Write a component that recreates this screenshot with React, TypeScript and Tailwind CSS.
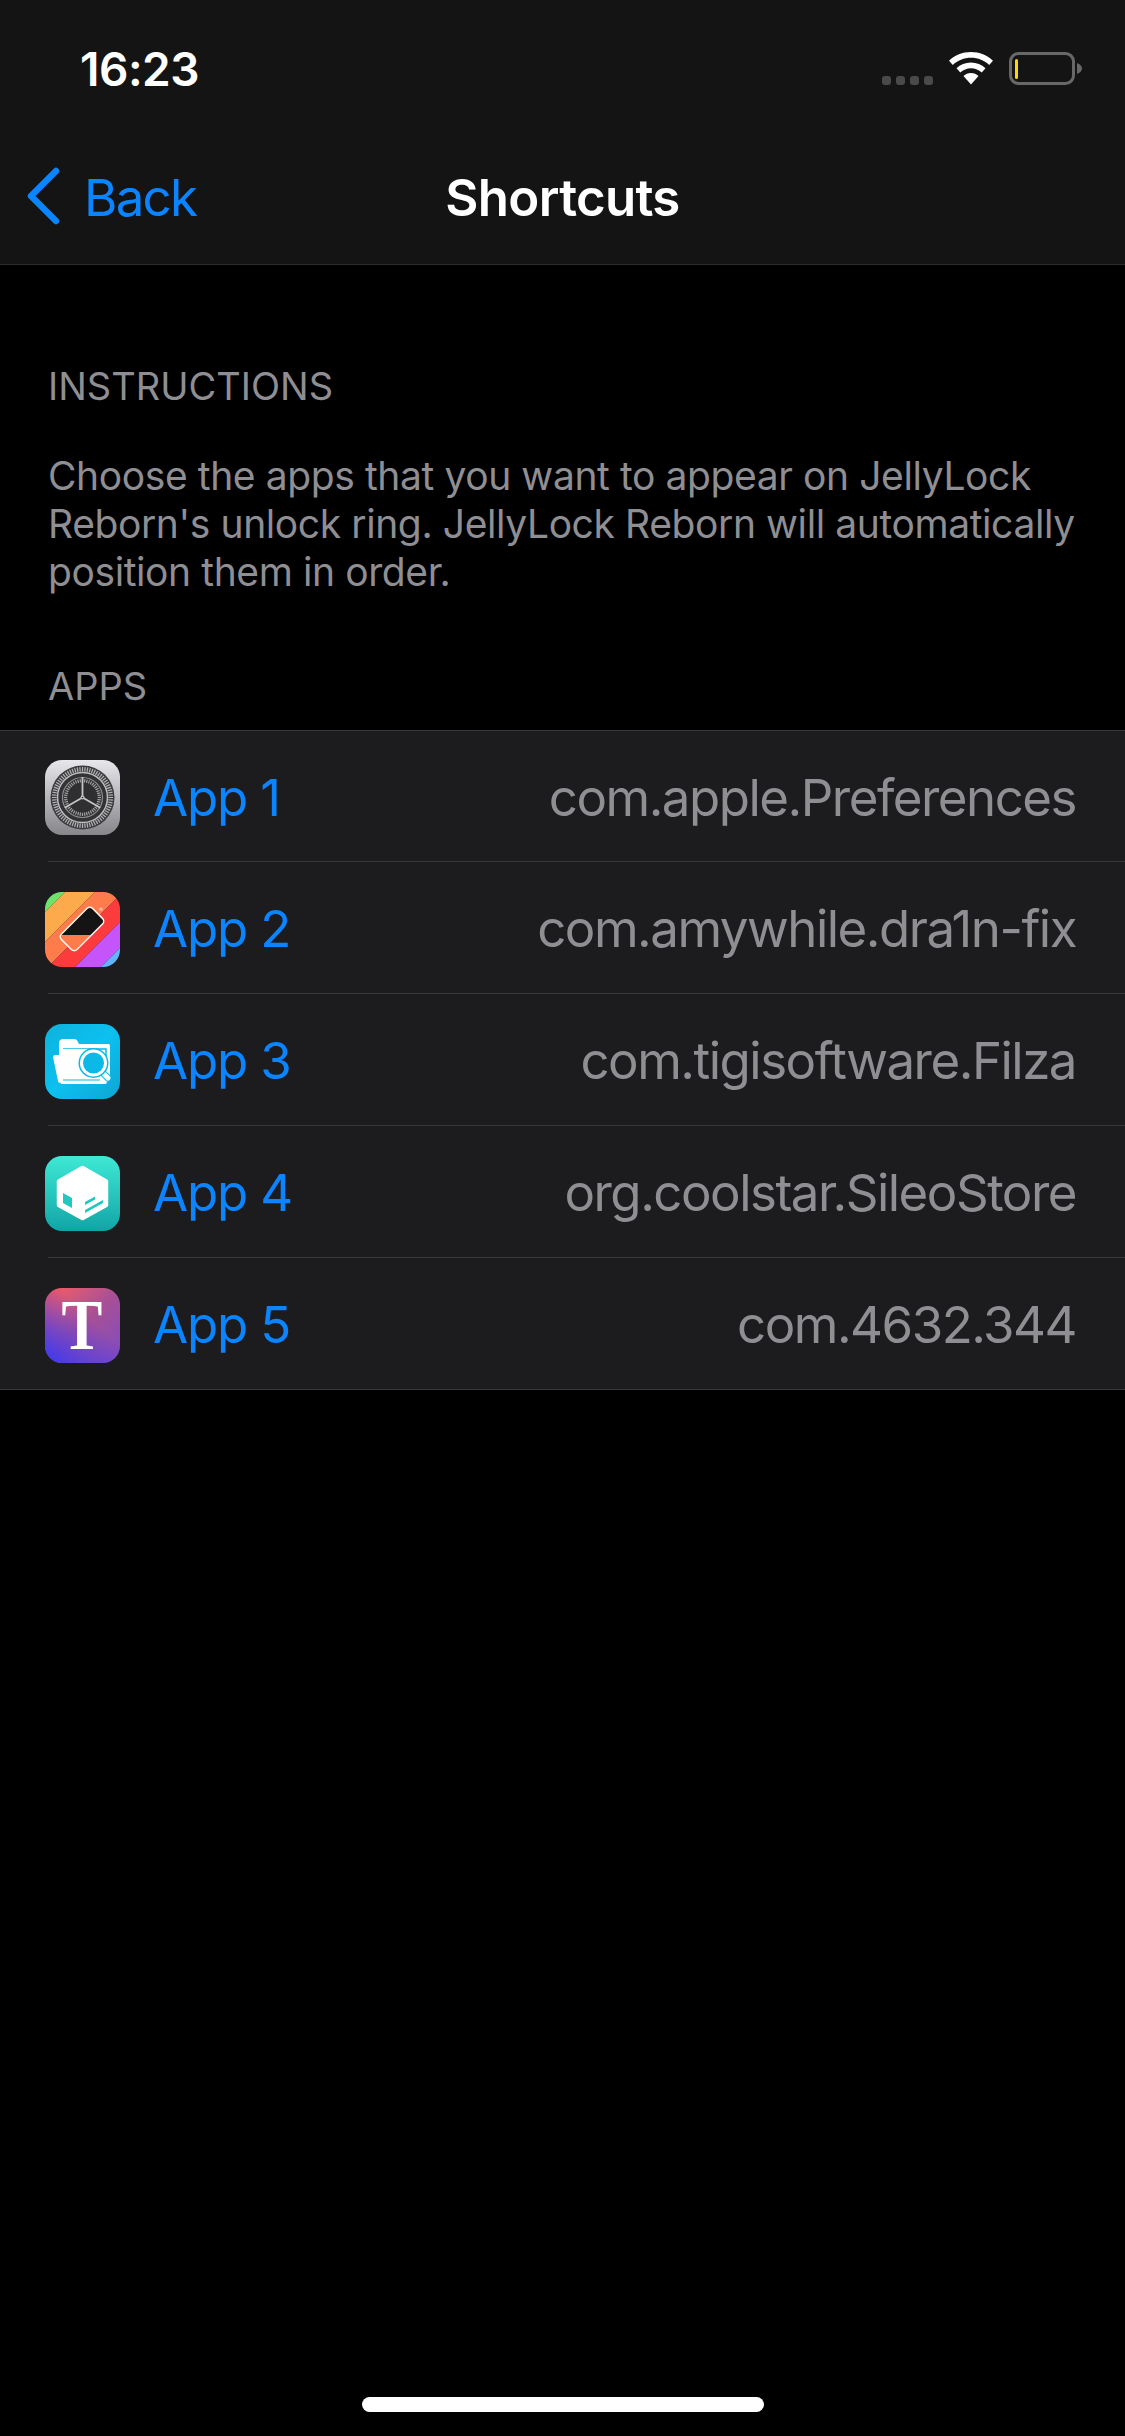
import { Fragment } from "react";

const sans = "font-['Inter','Liberation_Sans',sans-serif]";

function SignalDots() {
  return (
    <svg width="65" height="9" viewBox="0 0 65 9">
      {[0, 14, 28, 42].map((x) => (
        <rect key={x} x={x} width="9" height="9" rx="3" fill="#4a4a4a" />
      ))}
    </svg>
  );
}

function Wifi() {
  return (
    <svg width="46" height="33" viewBox="0 0 46 33">
      <path d="M23 0C14.500 0 6.700 3.300 1 8.700L4.800 13C9.500 8.500 16 5.800 23 5.800S36.500 8.500 41.200 13L45 8.700C39.300 3.300 31.500 0 23 0Z" fill="#fff" />
      <path d="M23 10.500C17.400 10.500 12.300 12.700 8.500 16.300L12.300 20.600C15.100 18 18.900 16.300 23 16.300S30.900 18 33.700 20.600L37.500 16.300C33.700 12.700 28.600 10.500 23 10.500Z" fill="#fff" />
      <path d="M23 21C20.100 21 17.500 22.100 15.500 24L23 32.500L30.500 24C28.500 22.100 25.900 21 23 21Z" fill="#fff" />
    </svg>
  );
}

function Battery() {
  return (
    <svg width="73" height="33" viewBox="0 0 73 33">
      <rect x="1.500" y="1.500" width="63" height="30" rx="8" fill="none" stroke="#686868" strokeWidth="3" />
      <rect x="6" y="7" width="3" height="20" rx="1.500" fill="#ffd60a" />
      <path d="M68 11C71 12 73 14 73 16.500S71 21 68 22Z" fill="#686868" />
    </svg>
  );
}

function SettingsIcon() {
  const outer = Array.from({ length: 72 }, (_, i) => i * 5);
  const inner = Array.from({ length: 48 }, (_, i) => i * 7.5);
  return (
    <div className="h-[75px] w-[75px] shrink-0 overflow-hidden rounded-[17px] bg-gradient-to-b from-[#e8e8ec] to-[#87878b]">
      <svg width="75" height="75" viewBox="0 0 75 75">
        <circle cx="37.500" cy="37.500" r="32" fill="#3c3c3e" />
        {outer.map((a) => (
          <line key={a} x1="37.500" y1="7" x2="37.500" y2="11.500" stroke="#b4b4b8" strokeWidth="1.200" transform={`rotate(${a} 37.500 37.500)`} />
        ))}
        <circle cx="37.500" cy="37.500" r="25" fill="#333335" stroke="#bdbdc0" strokeWidth="1.500" />
        <circle cx="37.500" cy="37.500" r="20" fill="none" stroke="#8e8e92" strokeWidth="1.200" />
        {inner.map((a) => (
          <line key={a} x1="37.500" y1="19" x2="37.500" y2="22.500" stroke="#a5a5a9" strokeWidth="1.100" transform={`rotate(${a} 37.500 37.500)`} />
        ))}
        <circle cx="37.500" cy="37.500" r="15" fill="#2f2f31" />
        {[0, 120, 240].map((a) => (
          <line key={a} x1="37.500" y1="37.500" x2="37.500" y2="17" stroke="#c4c4c8" strokeWidth="1.800" transform={`rotate(${a} 37.500 37.500)`} />
        ))}
        <circle cx="37.500" cy="37.500" r="2" fill="#c4c4c8" />
        <circle cx="37.500" cy="37.500" r="0.800" fill="#2f2f31" />
      </svg>
    </div>
  );
}

function band(a: number, b: number) {
  return `${a},0 ${b},0 0,${b} 0,${a}`;
}

function Dra1nIcon() {
  const stripes: [number, number, string][] = [
    [0, 20, "#6ee36c"],
    [20, 50, "#fdaa4c"],
    [50, 78, "#fe7b4c"],
    [78, 105, "#fb3b3c"],
    [105, 131, "#c555fb"],
    [131, 150, "#63b4ff"],
  ];
  return (
    <div className="h-[75px] w-[75px] shrink-0 overflow-hidden rounded-[17px]">
      <svg width="75" height="75" viewBox="0 0 75 75">
        {stripes.map(([a, b, c]) => (
          <polygon key={c} points={band(a, b)} fill={c} />
        ))}
        <defs>
          <clipPath id="cell">
            <rect x="-22" y="-11" width="44" height="22" rx="4" transform="translate(37 37) rotate(-45)" />
          </clipPath>
        </defs>
        <rect x="-22" y="-11" width="44" height="22" rx="4" transform="translate(37 37) rotate(-45)" fill="#141414" />
        <g clipPath="url(#cell)">
          <rect x="0" y="43" width="75" height="32" fill="#fe7b4c" />
          <polygon points="26,75 75,26 75,43 40,75" fill="#fb3b3c" />
        </g>
        <rect x="-22" y="-11" width="44" height="22" rx="4" transform="translate(37 37) rotate(-45)" fill="none" stroke="#fff3ea" strokeWidth="1.500" />
        <circle cx="56" cy="17" r="1.800" fill="#ffb3a8" />
      </svg>
    </div>
  );
}

function FilzaIcon() {
  return (
    <div className="h-[75px] w-[75px] shrink-0 overflow-hidden rounded-[17px] bg-gradient-to-br from-[#0db3dc] via-[#0cc0f0] to-[#0ea6d2]">
      <svg width="75" height="75" viewBox="0 0 75 75">
        <path d="M14 19C14 16 16 15 18 15H29C31 15 32 16 33 18L34 20H63C65 20 65 21 65 23V52L61 60H16L14 40Z" fill="#fff" />
        <path d="M18 25H61V44" fill="none" stroke="#0cb8e6" strokeWidth="1.500" />
        <path d="M8 33C8 32 9 31 10 31H18V25H47L50 32H56V59H16C14 59 13 58 13 57Z" fill="#fff" />
        <line x1="18" y1="56" x2="55" y2="56" stroke="#0cb8e6" strokeWidth="1.200" />
        <line x1="56" y1="47" x2="63" y2="54" stroke="#0cb8e6" strokeWidth="7" strokeLinecap="round" />
        <line x1="56" y1="47" x2="63" y2="54" stroke="#fff" strokeWidth="5" strokeLinecap="round" />
        <circle cx="48.500" cy="39" r="15" fill="#0cb8e6" />
        <circle cx="48.500" cy="39" r="13.500" fill="#fff" />
        <circle cx="48.500" cy="39" r="10.500" fill="#0cb8e6" />
      </svg>
    </div>
  );
}

function SileoIcon() {
  return (
    <div className="h-[75px] w-[75px] shrink-0 overflow-hidden rounded-[17px] bg-gradient-to-b from-[#3ee9d5] to-[#0fa5a6]">
      <svg width="75" height="75" viewBox="0 0 75 75">
        <polygon points="37.500,12 61,25.500 61,49 37.500,62 14,49 14,25.500" fill="#fff" stroke="#fff" strokeWidth="4.500" strokeLinejoin="round" />
        <polygon points="18,37 27,42 27,52 18,47" fill="#1ec9bf" />
        <polygon points="40,46 50,40.500 50,43.500 40,49" fill="#1ec9bf" />
        <polygon points="40,54 58,44 58,47 40,57" fill="#1ec9bf" />
      </svg>
    </div>
  );
}

function TweakIcon() {
  return (
    <div className="relative flex h-[75px] w-[75px] shrink-0 items-center justify-center rounded-[17px] bg-gradient-to-tl from-[#7d48c4] via-[#a84f95] to-[#ff5a55]">
      <div className="absolute inset-0 rounded-[17px] bg-gradient-to-tr from-[#3838f5] to-transparent to-60%" />
      <span className="relative scale-x-85 font-['Liberation_Serif',serif] text-[72px] leading-[75px] font-bold text-white">T</span>
    </div>
  );
}

const apps = [
  { name: "App 1", bundle: "com.apple.Preferences", icon: <SettingsIcon /> },
  { name: "App 2", bundle: "com.amywhile.dra1n-fix", icon: <Dra1nIcon /> },
  { name: "App 3", bundle: "com.tigisoftware.Filza", icon: <FilzaIcon /> },
  { name: "App 4", bundle: "org.coolstar.SileoStore", icon: <SileoIcon /> },
  { name: "App 5", bundle: "com.4632.344", icon: <TweakIcon /> },
];

export default function App() {
  return (
    <div className={`flex h-[2436px] w-[1125px] flex-col overflow-hidden bg-black ${sans}`}>
      <header className="h-[265px] shrink-0 border-b border-[#2c2c2e] bg-[#141414]">
        <div className="flex h-[132px] items-start justify-between pl-[80px] pr-[43px] pt-[45px]">
          <span className="text-[46px] leading-[48px] font-semibold tracking-[-0.500px] text-white">16:23</span>
          <div className="mt-[7px] flex items-end">
            <SignalDots />
            <div className="ml-[1px]">
              <Wifi />
            </div>
            <div className="ml-[15px]">
              <Battery />
            </div>
          </div>
        </div>
        <div className="grid h-[132px] grid-cols-[1fr_auto_1fr] items-center">
          <div className="flex items-center pl-[27px]">
            <svg width="33" height="58" viewBox="0 0 33 58" className="-mt-[4px]">
              <path d="M29 4L4 29L29 54" fill="none" stroke="#0a84ff" strokeWidth="6.500" strokeLinecap="round" strokeLinejoin="round" />
            </svg>
            <span className="ml-[24px] text-[51px] leading-[60px] tracking-[-1.700px] text-[#0a84ff]">Back</span>
          </div>
          <h1 className="text-[51px] leading-[60px] font-semibold tracking-[-0.700px] text-white">Shortcuts</h1>
          <div />
        </div>
      </header>

      <main className="pt-[97px]">
        <h2 className="px-[48px] text-[38px] leading-[48px] text-[#8e8e93]">INSTRUCTIONS</h2>
        <p className="mt-[42px] px-[48px] text-[39px] leading-[48px] tracking-[-0.400px] whitespace-nowrap text-[#8e8e93]">
          Choose the apps that you want to appear on JellyLock
          <br />
          Reborn's unlock ring. JellyLock Reborn will automatically
          <br />
          position them in order.
        </p>
        <h2 className="mt-[66px] px-[48px] text-[38px] leading-[48px] text-[#8e8e93]">APPS</h2>

        <ul className="mt-[20px] border-y border-[#38383a] bg-[#1c1c1e]">
          {apps.map((app, i) => (
            <Fragment key={app.name}>
              {i > 0 && <li aria-hidden className="ml-[48px] h-px bg-[#38383a]" />}
              <li className={`flex items-center pl-[45px] pr-[49px] pt-[3px] ${i === 0 ? "h-[130px]" : "h-[131px]"}`}>
                {app.icon}
                <span className="ml-[33px] text-[51px] leading-[60px] tracking-[-1.200px] text-[#0a84ff]">{app.name}</span>
                <span className="ml-auto text-[51px] leading-[60px] tracking-[-1.500px] text-[#8e8e93]">{app.bundle}</span>
              </li>
            </Fragment>
          ))}
        </ul>
      </main>

      <div className="mx-auto mt-auto mb-[24px] h-[15px] w-[402px] rounded-full bg-white" />
    </div>
  );
}
